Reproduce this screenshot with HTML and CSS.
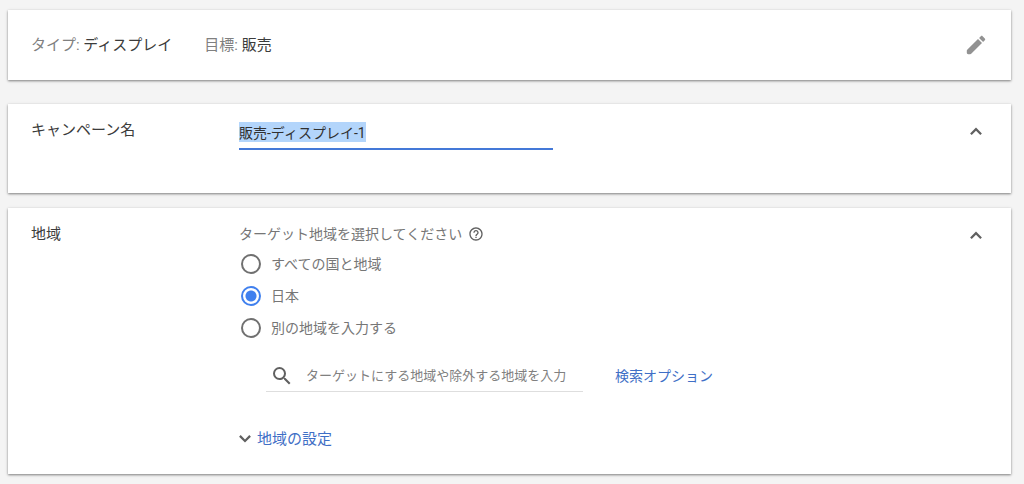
FILE: index.html
```
<!DOCTYPE html>
<html lang="ja">

<head>
  <meta charset="UTF-8">
  <title>キャンペーンの作成</title>
  <meta name="viewport" content="width=device-width, initial-scale=1.0">
  <link rel="stylesheet" href="styles.css">
</head>

<body>
  <main>
    <!-- タイプと目標 -->
    <section class="card summary">
      <p><span class="muted">タイプ:</span> ディスプレイ</p>
      <p><span class="muted">目標:</span> 販売</p>
      <button type="button" class="icon-btn edit" aria-label="編集">
        <svg width="24" height="24" viewBox="0 0 24 24">
          <path d="M3.200 16.800L14 6l4 4L7.200 20.800c-.3.300-.6.400-1 .400H4.200c-.8 0-1.400-.6-1.400-1.400v-2c0-.4.100-.7.400-1zM20.800 7.200c.5-.5.5-1.300 0-1.800l-2.200-2.200c-.5-.5-1.300-.5-1.800 0l-1.700 1.700 4 4 1.700-1.700z" />
        </svg>
      </button>
    </section>

    <!-- キャンペーン名 -->
    <section class="card name">
      <h2><label for="campaignName">キャンペーン名</label></h2>
      <div class="content">
        <input type="text" id="campaignName" class="name-input" value="販売-ディスプレイ-1">
      </div>
      <button type="button" class="icon-btn" aria-label="閉じる">
        <svg width="24" height="24" viewBox="0 0 24 24">
          <path d="M12 7.600l-5.900 5.900 1.600 1.600 4.300-4.300 4.300 4.300 1.600-1.600z" />
        </svg>
      </button>
    </section>

    <!-- 地域 -->
    <section class="card region">
      <h2>地域</h2>
      <div class="content">
        <fieldset>
          <legend>
            ターゲット地域を選択してください
            <svg width="16" height="16" viewBox="0 0 24 24">
              <path d="M11 18h2v-2h-2v2zm1-16C6.480 2 2 6.480 2 12s4.480 10 10 10 10-4.480 10-10S17.520 2 12 2zm0 18c-4.410 0-8-3.590-8-8s3.590-8 8-8 8 3.590 8 8-3.590 8-8 8zm0-14c-2.210 0-4 1.790-4 4h2c0-1.100.900-2 2-2s2 .900 2 2c0 2-3 1.750-3 5h2c0-2.250 3-2.500 3-5 0-2.210-1.790-4-4-4z" />
            </svg>
          </legend>
          <label class="option"><input type="radio" name="region" value="all">すべての国と地域</label>
          <label class="option"><input type="radio" name="region" value="jp" checked>日本</label>
          <label class="option"><input type="radio" name="region" value="other">別の地域を入力する</label>
        </fieldset>
        <div class="search-row">
          <div class="search">
            <svg width="24" height="24" viewBox="0 0 24 24">
              <path d="M15.500 14h-.790l-.280-.270A6.471 6.471 0 0 0 16 9.500 6.500 6.500 0 1 0 9.500 16c1.610 0 3.090-.590 4.230-1.570l.270.280v.790l5 4.990L20.490 19l-4.990-5zm-6 0C7.010 14 5 11.990 5 9.500S7.010 5 9.500 5 14 7.010 14 9.500 11.990 14 9.500 14z" />
            </svg>
            <input type="text" aria-label="地域を検索" placeholder="ターゲットにする地域や除外する地域を入力">
          </div>
          <a href="#">検索オプション</a>
        </div>
        <a href="#" class="settings">
          <svg width="12" height="8" viewBox="0 0 12 8">
            <path d="M6 7.600L.1 1.700 1.700.1 6 4.400 10.300.1l1.600 1.600z" />
          </svg>
          地域の設定
        </a>
      </div>
      <button type="button" class="icon-btn" aria-label="閉じる">
        <svg width="24" height="24" viewBox="0 0 24 24">
          <path d="M12 7.600l-5.900 5.900 1.600 1.600 4.300-4.300 4.300 4.300 1.600-1.600z" />
        </svg>
      </button>
    </section>
  </main>

  <script>
    // 名前をすぐに書き換えられるように選択しておく
    const campaignName = document.getElementById('campaignName');
    campaignName.focus();
    campaignName.select();
  </script>
</body>

</html>
```
FILE: styles.css
```
/* 共通 */
* {
  box-sizing: border-box;
}

body {
  margin: 0;
  padding: 10px 13px 10px 8px;
  font-family: Roboto, 'Noto Sans CJK JP', sans-serif;
  font-size: 14px;
  line-height: 20px;
  background-color: #f4f4f4;
  color: #3c3c3c;
}

h2,
p {
  margin: 0;
  font-size: 15px;
  font-weight: normal;
}

a {
  color: #3f6fc6;
  text-decoration: none;
}

svg {
  display: block;
  fill: #606060;
}

/* カード */
.card {
  display: flex;
  align-items: flex-start;
  padding: 16px 23px;
  background-color: #fff;
  box-shadow: 0 1px 2px rgba(0, 0, 0, 0.4), 0 1px 4px rgba(0, 0, 0, 0.12);
}

.card h2 {
  width: 208px;
  flex-shrink: 0;
}

.content {
  flex: 1;
}

.icon-btn {
  padding: 0;
  border: none;
  background: none;
  cursor: pointer;
}

/* タイプと目標 */
.summary {
  align-items: center;
  gap: 32px;
  min-height: 70px;
  margin-bottom: 24px;
}

.summary .muted {
  color: #808080;
}

.edit {
  margin-left: auto;
}

.edit svg {
  fill: #929292;
}

/* キャンペーン名 */
.name {
  min-height: 89px;
  margin-bottom: 15px;
}

.name-input {
  display: block;
  width: 314px;
  height: 30px;
  padding: 0 0 5px;
  border: none;
  border-bottom: 2px solid #4479d8;
  outline: none;
  font: inherit;
  color: #303030;
}

.name-input::selection {
  background-color: #b3d5fb;
  color: #303030;
}

/* 地域 */
.region {
  min-height: 266px;
}

fieldset {
  margin: 0;
  padding: 0;
  border: none;
  color: #767676;
}

legend {
  display: flex;
  align-items: center;
  gap: 6px;
  padding: 0 0 4px;
}

.option {
  display: flex;
  align-items: center;
  gap: 9px;
  height: 32px;
}

.option input {
  appearance: none;
  width: 20px;
  height: 20px;
  margin: 0 1px 0 2px;
  border: 2px solid #707070;
  border-radius: 50%;
}

.option input:checked {
  border-color: #4080ee;
  background: radial-gradient(circle, #4080ee 5px, #fff 6px);
}

.search-row {
  display: flex;
  align-items: center;
  gap: 32px;
  margin: 16px 0 36px 27px;
}

.search {
  display: flex;
  align-items: center;
  gap: 12px;
  width: 317px;
  height: 32px;
  padding-left: 4px;
  border-bottom: 1px solid #dedede;
}

.search input {
  flex: 1;
  min-width: 0;
  padding: 0;
  border: none;
  outline: none;
  font: inherit;
  font-size: 13px;
}

.search input::placeholder {
  color: #808080;
}

.settings {
  display: inline-flex;
  align-items: center;
  gap: 6px;
  font-size: 15px;
}
```
